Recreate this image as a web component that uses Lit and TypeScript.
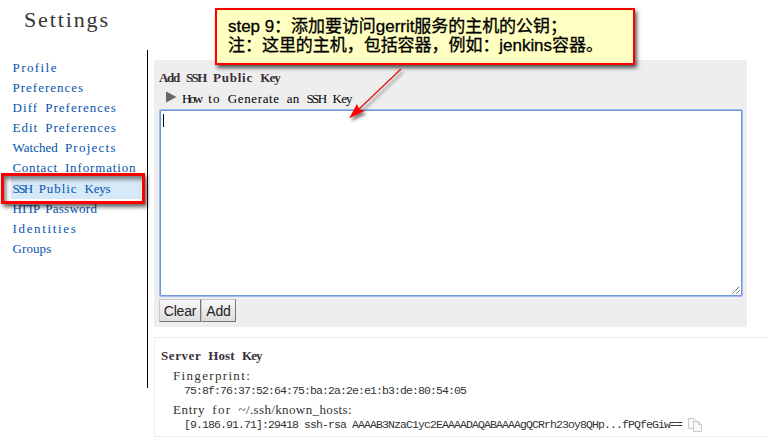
import { LitElement, html, css } from "lit";
import { customElement, property, state } from "lit/decorators.js";
import { styleMap } from "lit/directives/style-map.js";

/** A word of proportional text, tracked so that it fills a whole number of fixed-width cells. */
@customElement("cell-word")
export class CellWord extends LitElement {
  static styles = css`
    :host { display: inline-block; white-space: pre; }
    .cells { display: inline-block; white-space: pre; }
  `;

  @property() text = "";
  @property({ type: Number }) cell = 6.55;
  @state() private tracking = 0;

  firstUpdated() {
    const node = this.renderRoot.querySelector(".cells")!;
    const text = document.createTreeWalker(node, NodeFilter.SHOW_TEXT).nextNode() as Text;
    const count = this.text.trimEnd().length;
    const range = document.createRange();
    range.setStart(text, 0);
    range.setEnd(text, count);
    this.tracking = (count * this.cell - 0.5 - range.getBoundingClientRect().width) / count;
  }

  render() {
    const box = { letterSpacing: `${this.tracking}px`, width: `${this.text.length * this.cell}px` };
    return html`<span class="cells" style=${styleMap(box)}>${this.text}</span>`;
  }
}

const cells = (text: string, cell = 6.55) =>
  (text.match(/\S+\s*/g) ?? []).map((w) => html`<cell-word .text=${w} .cell=${cell}></cell-word>`);

@customElement("app-root")
export class AppRoot extends LitElement {
  static styles = css`
    * { box-sizing: border-box; }
    :host {
      display: block;
      position: relative;
      width: 768px;
      height: 442px;
      overflow: hidden;
      background: #fff;
      color: #000;
      font: 13px/20px "Liberation Serif", serif;
      white-space: pre;
    }
    h1 {
      height: 50px;
      margin: 0;
      padding: 7px 0 0 24px;
      font-size: 22px;
      line-height: 26px;
      font-weight: 400;
      color: #353535;
    }
    .page { display: flex; align-items: flex-start; }
    nav {
      width: 148px;
      height: 338px;
      padding: 8px 0 0 11px;
      border-right: 1px solid #000;
    }
    .item {
      display: block;
      width: 130px;
      height: 20px;
      padding-left: 1.5px;
      color: #0654ac;
      text-decoration: none;
    }
    .item.selected { height: 21px; line-height: 22px; background: #d6e9f8; }
    main { width: 620px; padding: 10px 0 0 6px; }
    .add { width: 593px; height: 267px; padding: 8px 4px 0 5px; background: #eee; }
    h2 {
      margin: 0;
      font-size: 13px;
      line-height: 20px;
      font-weight: 700;
      color: #3a3038;
    }
    .disclosure { display: flex; align-items: center; height: 21px; padding-left: 6px; line-height: 18px; }
    .disclosure svg { margin: -4px 5px 0 0; }
    .key {
      position: relative;
      width: 584px;
      height: 188px;
      border: 1px solid #9dbdf0;
      border-radius: 2px;
      box-shadow: inset 0 0 0 1px #7097d4;
      background: #fff;
    }
    .caret { width: 1px; height: 13px; margin: 4px 0 0 3px; background: #000; }
    .grip { position: absolute; right: 2px; bottom: 2px; }
    .buttons { display: flex; margin-top: 2px; }
    button {
      height: 23px;
      padding: 0;
      border: 1px solid;
      border-color: #c8c8c8 #777 #777 #c8c8c8;
      border-radius: 0;
      background: linear-gradient(#f8f8f8, #ddd);
      color: #222;
      font: 14px/20px "Liberation Sans", sans-serif;
      letter-spacing: -0.2px;
    }
    .clear { width: 42px; }
    .submit { width: 35px; }
    .host {
      height: 100px;
      margin-top: 10px;
      padding: 8px 0 0 6px;
      border: 1px solid #ececec;
      border-right: 0;
      color: #333;
    }
    .label { height: 20px; padding-left: 12px; }
    .value {
      display: flex;
      align-items: center;
      height: 14px;
      padding-left: 23px;
      font: 11.5px/10px "Liberation Mono", monospace;
      letter-spacing: -0.9px;
    }
    .value span { margin-top: -4px; }
    .value svg { margin: -5px 0 0 6px; }
    .callout {
      position: absolute;
      left: 215px;
      top: 8px;
      width: 420px;
      height: 57px;
      padding: 7px 0 0 11px;
      border: 2px solid #f00;
      background: #ffffc1;
      box-shadow: 2px 3px 4px rgba(0, 0, 0, 0.65);
      color: #000;
      font: 17px/19px "Liberation Sans", "Noto Sans CJK SC", sans-serif;
      letter-spacing: -0.04px;
      -webkit-text-stroke: 0.3px #000;
    }
    .marker {
      position: absolute;
      left: 1px;
      top: 173px;
      width: 144px;
      height: 31px;
      border: 3px solid #f00;
      box-shadow: 2px 3px 4px rgba(0, 0, 0, 0.6), inset 2px 3px 4px rgba(0, 0, 0, 0.55);
    }
    .arrow { position: absolute; left: 340px; top: 62px; }
  `;

  private items = [
    "Profile", "Preferences", "Diff Preferences", "Edit Preferences", "Watched Projects",
    "Contact Information", "SSH Public Keys", "HTTP Password", "Identities", "Groups",
  ];

  render() {
    return html`<h1>${cells("Settings", 10.8)}</h1><div class="page"><nav>${this.items.map(
      (t) => html`<a class="item ${t === "SSH Public Keys" ? "selected" : ""}">${cells(t)}</a>`
    )}</nav><main><section class="add"><h2>${cells("Add SSH Public Key", 6.75)}</h2><div class="disclosure"><svg width="12" height="12"><path d="M1 0.5 11.5 6 1 11.5Z" fill="#666"/></svg><span>${cells("How to Generate an SSH Key")}</span></div><div class="key"><div class="caret"></div><svg class="grip" width="8" height="8" stroke="#444" stroke-dasharray="1.2 .4"><path d="M0.5 7.5 7.5 .5M4.5 7.5 7.5 4.5"/></svg></div><div class="buttons"><button class="clear">Clear</button><button class="submit">Add</button></div></section><section class="host"><h2>${cells("Server Host Key", 6.75)}</h2><div class="label">${cells("Fingerprint:")}</div><div class="value"><span>75:8f:76:37:52:64:75:ba:2a:2e:e1:b3:de:80:54:05</span></div><div class="label">${cells("Entry for ")}${cells("~/.ssh/known_hosts:", 6)}</div><div class="value"><span>[9.186.91.71]:29418 ssh-rsa AAAAB3NzaC1yc2EAAAADAQABAAAAgQCRrh23oy8QHp...fPQfeGiw==</span><svg width="14" height="14" fill="#fafafa" stroke="#c9c9c9"><path d="M.5.5H6L8.5 3V10.5H.5Z"/><path d="M5.5 3.5H10.5L13.5 6.5V13.5H5.5ZM10.5 3.5V6.5H13.5"/></svg></div></section></main></div>
<div class="marker"></div><div class="callout">step 9：添加要访问gerrit服务的主机的公钥；
注：这里的主机，包括容器，例如：jenkins容器。</div><svg class="arrow" width="74" height="66"><defs><filter id="s" x="-20%" y="-20%" width="150%" height="150%"><feDropShadow dx="2" dy="3" stdDeviation="1.5" flood-opacity=".5"/></filter></defs><g filter="url(#s)"><path d="M61 7 18 48" stroke="#e01010" stroke-width="1.2"/><path d="M9 56.5 17 42 19 47 24.5 49Z" fill="#f00"/></g></svg>`;
  }
}
